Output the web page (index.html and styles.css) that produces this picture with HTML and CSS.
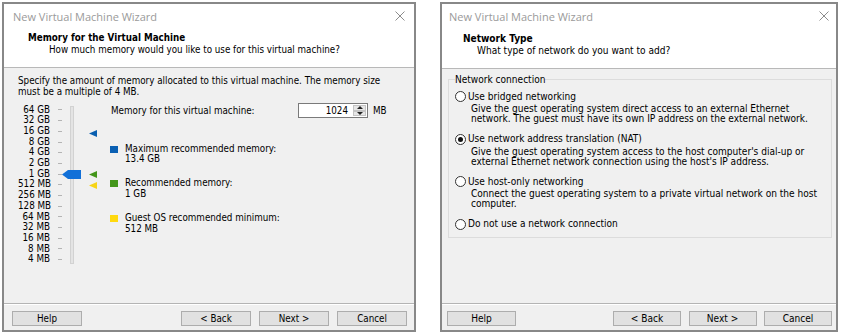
FILE: index.html
```html
<!DOCTYPE html>
<html>
<head>
<meta charset="utf-8">
<title>New Virtual Machine Wizard</title>
<link rel="stylesheet" href="styles.css">
</head>
<body>
<div class="screen">

  <div class="dlg dlg-mem">
    <div class="titlebar">
      <span class="ttl">New Virtual Machine Wizard</span>
      <svg class="close" viewBox="0 0 10 10"><path d="M0.5 0.5L9.5 9.5M9.5 0.5L0.5 9.5" stroke="#8c8c8c" stroke-width="1" fill="none"/></svg>
    </div>
    <div class="head">
      <div class="h1">Memory for the Virtual Machine</div>
      <div class="h2">How much memory would you like to use for this virtual machine?</div>
    </div>
    <div class="body">
      <p class="intro">Specify the amount of memory allocated to this virtual machine. The memory size<br>must be a multiple of 4 MB.</p>
      <div class="mem">
        <div class="scale">
          <ul class="labels">
            <li><span class="lab">64 GB</span><span class="tick"></span></li>
            <li><span class="lab">32 GB</span><span class="tick"></span></li>
            <li><span class="lab">16 GB</span><span class="tick"></span></li>
            <li><span class="lab">8 GB</span><span class="tick"></span></li>
            <li><span class="lab">4 GB</span><span class="tick"></span></li>
            <li><span class="lab">2 GB</span><span class="tick"></span></li>
            <li><span class="lab">1 GB</span><span class="tick"></span></li>
            <li><span class="lab">512 MB</span><span class="tick"></span></li>
            <li><span class="lab">256 MB</span><span class="tick"></span></li>
            <li><span class="lab">128 MB</span><span class="tick"></span></li>
            <li><span class="lab">64 MB</span><span class="tick"></span></li>
            <li><span class="lab">32 MB</span><span class="tick"></span></li>
            <li><span class="lab">16 MB</span><span class="tick"></span></li>
            <li><span class="lab">8 MB</span><span class="tick"></span></li>
            <li><span class="lab">4 MB</span><span class="tick"></span></li>
          </ul>
          <div class="track"></div>
          <svg class="thumb" viewBox="0 0 19 9"><polygon points="0,4.5 6,0 19,0 19,9 6,9" fill="#1170d8"/></svg>
          <svg class="mk mk-max" viewBox="0 0 8 7"><polygon points="0,3.5 8,0 8,7" fill="#0a5fb0"/></svg>
          <svg class="mk mk-rec" viewBox="0 0 8 7"><polygon points="0,3.5 8,0 8,7" fill="#43951a"/></svg>
          <svg class="mk mk-min" viewBox="0 0 8 7"><polygon points="0,3.5 8,0 8,7" fill="#f7d417"/></svg>
        </div>
        <div class="side">
          <div class="row1">
            <span class="lbl">Memory for this virtual machine:</span>
            <div class="spin">
              <span class="val">1024</span>
              <span class="btns"><i class="up"></i><i class="dn"></i></span>
            </div>
            <span class="unit">MB</span>
          </div>
          <div class="leg leg-first"><span class="sq sq-blue"></span><div>Maximum recommended memory:<br>13.4 GB</div></div>
          <div class="leg"><span class="sq sq-green"></span><div>Recommended memory:<br>1 GB</div></div>
          <div class="leg"><span class="sq sq-yellow"></span><div>Guest OS recommended minimum:<br>512 MB</div></div>
        </div>
      </div>
    </div>
    <div class="foot">
      <button class="btn">Help</button>
      <span class="fill"></span>
      <button class="btn">&lt; Back</button>
      <button class="btn">Next &gt;</button>
      <button class="btn">Cancel</button>
    </div>
  </div>

  <div class="dlg dlg-net">
    <div class="titlebar">
      <span class="ttl">New Virtual Machine Wizard</span>
      <svg class="close" viewBox="0 0 10 10"><path d="M0.5 0.5L9.5 9.5M9.5 0.5L0.5 9.5" stroke="#8c8c8c" stroke-width="1" fill="none"/></svg>
    </div>
    <div class="head">
      <div class="h1">Network Type</div>
      <div class="h2">What type of network do you want to add?</div>
    </div>
    <div class="body">
      <fieldset class="group">
        <legend>Network connection</legend>
        <div class="item">
          <div class="opt"><span class="radio"></span>Use bridged networking</div>
          <div class="desc">Give the guest operating system direct access to an external Ethernet<br>network. The guest must have its own IP address on the external network.</div>
        </div>
        <div class="item">
          <div class="opt"><span class="radio on"></span>Use network address translation (NAT)</div>
          <div class="desc">Give the guest operating system access to the host computer's dial-up or<br>external Ethernet network connection using the host's IP address.</div>
        </div>
        <div class="item">
          <div class="opt"><span class="radio"></span>Use host-only networking</div>
          <div class="desc">Connect the guest operating system to a private virtual network on the host<br>computer.</div>
        </div>
        <div class="item">
          <div class="opt"><span class="radio"></span>Do not use a network connection</div>
        </div>
      </fieldset>
    </div>
    <div class="foot">
      <button class="btn">Help</button>
      <span class="fill"></span>
      <button class="btn">&lt; Back</button>
      <button class="btn">Next &gt;</button>
      <button class="btn">Cancel</button>
    </div>
  </div>

</div>
</body>
</html>
```

FILE: styles.css
```css
* { box-sizing: border-box; margin: 0; padding: 0; }
html, body { background: #fff; }
body {
  font-family: "DejaVu Sans Condensed", "DejaVu Sans", sans-serif;
  font-stretch: condensed;
  font-size: 9.75px;
  color: #000;
  white-space: nowrap;
}
.screen { display: flex; gap: 24px; padding: 2px 0 0 2px; }

.dlg {
  height: 330px;
  border: 2px solid #888;
  background: #fff;
  display: flex;
  flex-direction: column;
}
.dlg-mem { width: 414px; }
.dlg-net { width: 398px; font-size: 10.05px; }

.titlebar {
  height: 24px;
  flex: none;
  display: flex;
  align-items: center;
  justify-content: space-between;
  padding: 0 9px;
}
.dlg-net .titlebar { padding: 0 7px; }
.ttl {
  font-family: "Open Sans", "Noto Sans", sans-serif;
  font-stretch: normal;
  font-size: 11px;
  color: #9a9a9a;
}
.close { width: 10px; height: 10px; display: block; }

.head {
  flex: none;
  height: 40px;
  border-bottom: 1px solid #b8b8b8;
  line-height: 12px;
  padding-top: 4px;
}
.dlg-net .head { height: 41px; padding-top: 5px; }
.h1 { font-weight: bold; padding-left: 24px; }
.h2 { padding-left: 45px; }
.dlg-net .h1 { padding-left: 21px; }
.dlg-net .h2 { padding-left: 35px; }

.body { flex: 1; background: #f0f0f0; }

.intro { line-height: 11px; padding: 6.5px 0 0 14px; }

.mem { display: flex; padding-left: 14px; margin-top: 6.5px; }
.scale { position: relative; width: 92px; display: flex; margin-top: 1.65px; flex: none; }
.labels { list-style: none; }
.labels li { height: 10.7px; line-height: 10.7px; display: flex; align-items: center; }
.lab { width: 32px; text-align: right; }
.tick { width: 4px; height: 1px; background: #b4b4b4; margin-left: 8px; }
.track {
  width: 4px;
  height: 158px;
  margin: 1.35px 0 0 8px;
  background: #e4e4e4;
  border: 1px solid #d2d2d2;
}
.thumb { position: absolute; left: 44px; top: 65px; width: 19px; height: 9px; }
.mk { position: absolute; left: 71px; width: 8px; height: 7px; }
.mk-max { top: 25px; }
.mk-rec { top: 66.2px; }
.mk-min { top: 77.2px; }

.side { flex: 1; }
.row1 { display: flex; align-items: center; height: 15px; }
.lbl { width: 188px; padding-left: 1px; }
.spin {
  width: 70px;
  height: 15px;
  border: 1px solid #7a7a7a;
  background: #fff;
  display: flex;
}
.val { flex: 1; text-align: right; padding-right: 4px; line-height: 13px; }
.btns { width: 15px; display: flex; flex-direction: column; padding: 1px; }
.btns i {
  flex: 1;
  display: block;
  background: #e6e6e6;
  border: 1px solid #c4c4c4;
  position: relative;
}
.btns i::after {
  content: "";
  position: absolute;
  left: 50%;
  top: 50%;
  margin-left: -3px;
  border-left: 3px solid transparent;
  border-right: 3px solid transparent;
}
.btns .up::after { margin-top: -2px; border-bottom: 3px solid #222; }
.btns .dn::after { margin-top: -1px; border-top: 3px solid #222; }
.unit { margin-left: 5px; }

.leg { display: flex; align-items: flex-start; line-height: 10.7px; margin-top: 13.3px; }
.leg-first { margin-top: 25.65px; }
.sq { width: 8px; height: 7px; margin: 2px 7px 0 0; flex: none; }
.sq-blue { background: #0a60b3; }
.sq-green { background: #44961b; }
.sq-yellow { background: #ffd90f; }

.foot {
  flex: none;
  height: 27px;
  background: #f0f0f0;
  border-top: 1px solid #b4b4b4;
  box-shadow: inset 0 1px 0 #fff;
  display: flex;
  gap: 8px;
  padding: 7px 7px 4px 8px;
}
.fill { flex: 1; }
.btn {
  width: 70px;
  height: 15px;
  background: #e1e1e1;
  border: 1px solid #adadad;
  font: inherit;
  color: #000;
  line-height: 13px;
}
.dlg-net .foot { gap: 7.5px; padding: 7px 4px 4px 5px; }
.dlg-net .btn { width: 68px; }
.dlg-net .btn:first-child { width: 69px; }

.group {
  margin: 4.5px 4px 0 6px;
  border: 1px solid #dcdcdc;
  padding: 6px 0 7px 6px;
}
.group legend { line-height: 11px; padding: 0; }
.item + .item { margin-top: 9px; }
.opt { display: flex; align-items: center; height: 12px; line-height: 12px; }
.radio {
  width: 11px;
  height: 11px;
  border: 1px solid #333;
  border-radius: 50%;
  background: #fff;
  margin-right: 2px;
  position: relative;
  flex: none;
}
.radio.on::after {
  content: "";
  position: absolute;
  left: 2px;
  top: 2px;
  width: 5px;
  height: 5px;
  border-radius: 50%;
  background: #111;
}
.desc { padding-left: 16px; line-height: 10px; margin-top: 1.5px; }
```
